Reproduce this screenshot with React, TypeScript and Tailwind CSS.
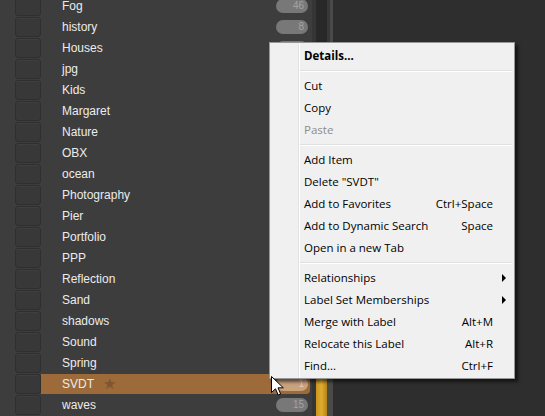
import React from 'react';

const labels: { name: string; count: number }[] = [
  { name: 'Fog', count: 46 },
  { name: 'history', count: 8 },
  { name: 'Houses', count: 12 },
  { name: 'jpg', count: 3 },
  { name: 'Kids', count: 21 },
  { name: 'Margaret', count: 5 },
  { name: 'Nature', count: 33 },
  { name: 'OBX', count: 9 },
  { name: 'ocean', count: 17 },
  { name: 'Photography', count: 64 },
  { name: 'Pier', count: 6 },
  { name: 'Portfolio', count: 28 },
  { name: 'PPP', count: 2 },
  { name: 'Reflection', count: 11 },
  { name: 'Sand', count: 7 },
  { name: 'shadows', count: 14 },
  { name: 'Sound', count: 10 },
  { name: 'Spring', count: 19 },
  { name: 'SVDT', count: 1 },
  { name: 'waves', count: 15 },
];

type MenuEntry =
  | { type: 'sep' }
  | { type: 'item'; label: string; shortcut?: string; bold?: boolean; disabled?: boolean; sub?: boolean };

const menu: MenuEntry[] = [
  { type: 'item', label: 'Details...', bold: true },
  { type: 'sep' },
  { type: 'item', label: 'Cut' },
  { type: 'item', label: 'Copy' },
  { type: 'item', label: 'Paste', disabled: true },
  { type: 'sep' },
  { type: 'item', label: 'Add Item' },
  { type: 'item', label: 'Delete "SVDT"' },
  { type: 'item', label: 'Add to Favorites', shortcut: 'Ctrl+Space' },
  { type: 'item', label: 'Add to Dynamic Search', shortcut: 'Space' },
  { type: 'item', label: 'Open in a new Tab' },
  { type: 'sep' },
  { type: 'item', label: 'Relationships', sub: true },
  { type: 'item', label: 'Label Set Memberships', sub: true },
  { type: 'item', label: 'Merge with Label', shortcut: 'Alt+M' },
  { type: 'item', label: 'Relocate this Label', shortcut: 'Alt+R' },
  { type: 'item', label: 'Find...', shortcut: 'Ctrl+F' },
];

function LabelRow({ name, count }: { name: string; count: number }) {
  const selected = name === 'SVDT';
  return (
    <div className="flex h-[21px] items-center">
      <div className="ml-[15px] h-[20px] w-[26px] shrink-0 rounded-[3px] border border-[#2f2f2f] bg-[#383838] shadow-[inset_0_1px_0_rgba(255,255,255,0.04)]" />
      <div
        className={`mr-[2px] flex h-[20px] flex-1 items-center pl-[21px] pr-[2px] ${
          selected ? 'rounded-r-[4px] bg-[#9d6a3a]' : ''
        }`}
      >
        <span className="text-[12px] text-[#ececec]">{name}</span>
        {selected && <span className="ml-[9px] text-[15px] leading-none text-[#7e5630]">★</span>}
        <div
          className={`ml-auto flex h-[14px] w-[32px] items-center justify-end rounded-full pr-[4px] text-[10px] leading-none ${
            selected ? 'bg-[#c9a27e] text-[#e2cbb4]' : 'bg-[#787878] text-[#a3a3a3]'
          }`}
        >
          {count}
        </div>
      </div>
    </div>
  );
}

function ContextMenu() {
  return (
    <div
      className="absolute left-[269px] top-[42px] w-[246px] border border-[#979797] bg-[#f0f0f0] pb-[1px] pt-[2px] text-[11.5px] text-black shadow-[3px_3px_3px_rgba(0,0,0,0.55)]"
      style={{ fontFamily: '"Open Sans", "Noto Sans", sans-serif' }}
    >
      {/* icon gutter line */}
      <div className="absolute bottom-0 left-[28px] top-0 w-[2px] border-l border-[#e2e3e3] bg-white" />
      {menu.map((m, i) =>
        m.type === 'sep' ? (
          <div key={i} className="flex h-[8px] items-center pl-[30px] pr-[2px]">
            <div className="h-[2px] w-full border-t border-[#e0e0e0] bg-white" />
          </div>
        ) : (
          <div key={i} className="relative flex h-[22px] items-center pl-[34px] pr-[21px]">
            <span
              className={`${m.bold ? 'font-bold' : ''} ${m.disabled ? 'text-[#8d8d8d]' : ''}`}
            >
              {m.label}
            </span>
            {m.shortcut && <span className="ml-auto">{m.shortcut}</span>}
            {m.sub && (
              <svg className="absolute right-[8px] top-[7px]" width="4" height="8" viewBox="0 0 4 8">
                <path d="M0 0 L4 4 L0 8 Z" fill="#000" />
              </svg>
            )}
          </div>
        )
      )}
    </div>
  );
}

export default function App() {
  return (
    <div
      className="relative flex h-[416px] w-[545px] overflow-hidden bg-[#2e2e2e]"
      style={{ fontFamily: '"Liberation Sans", Arial, sans-serif' }}
    >
      {/* Label list */}
      <div className="h-full w-[312px] shrink-0 bg-[#3d3d3d]">
        <div className="mt-[-5px]">
          {labels.map((l) => (
            <LabelRow key={l.name} name={l.name} count={l.count} />
          ))}
        </div>
      </div>

      {/* Scrollbar strip */}
      <div className="h-full w-[4px] bg-[#353535]" />
      <div className="flex h-full w-[11px] flex-col bg-[#282828]">
        <div className="flex-1" />
        <div className="h-[40px] bg-gradient-to-r from-[#c9951f] via-[#e0ac2c] to-[#b4851c]" />
      </div>
      <div className="flex h-full w-[3px] flex-col bg-[#373737]">
        <div className="flex-1" />
        <div className="h-[40px] bg-[#4b4d40]" />
      </div>
      <div className="h-full w-[3px] bg-[#4a4a4a]" />
      <div className="h-full flex-1 bg-[#2e2e2e]" />

      <ContextMenu />

      {/* mouse cursor */}
      <svg className="absolute left-[271px] top-[376px]" width="14" height="21" viewBox="0 0 14 21">
        <path
          d="M0.5 0.5 L0.5 16.5 L4.5 12.8 L7.2 19 L9.6 18 L7 11.8 L12.3 11.8 Z"
          fill="#fff"
          stroke="#000"
          strokeWidth="1"
          strokeLinejoin="miter"
        />
      </svg>
    </div>
  );
}
